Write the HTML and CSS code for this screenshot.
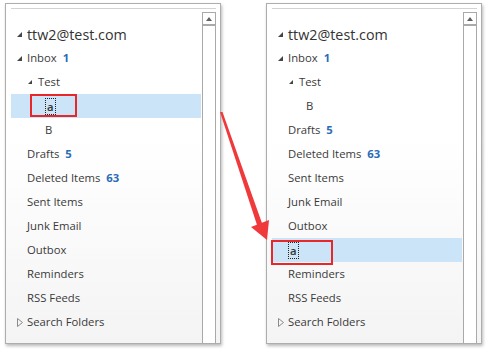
FILE: index.html
```html
<!DOCTYPE html>
<html>
<head>
<meta charset="utf-8">
<link rel="stylesheet" href="styles.css">
</head>
<body>
<div class="stage">
  <div class="panel">
    <div class="rule"></div>
    <div class="body">
      <div class="tree">
        <div class="row account"><span class="exp"></span>ttw2@test.com</div>
        <div class="row"><span class="exp"></span>Inbox<b class="count">1</b></div>
        <div class="row l1"><span class="exp"></span>Test</div>
        <div class="row l2 sel"><span class="focus">a</span><span class="mark mark-left"></span></div>
        <div class="row l2">B</div>
        <div class="row l0">Drafts<b class="count">5</b></div>
        <div class="row l0">Deleted Items<b class="count">63</b></div>
        <div class="row l0">Sent Items</div>
        <div class="row l0">Junk Email</div>
        <div class="row l0">Outbox</div>
        <div class="row l0">Reminders</div>
        <div class="row l0">RSS Feeds</div>
        <div class="row"><svg class="col" width="6" height="9" viewBox="0 0 6 9"><path d="M0.5 0.5 L5.5 4.5 L0.5 8.5 Z" fill="none" stroke="#8a8a8a" stroke-width="1"/></svg>Search Folders</div>
      </div>
      <div class="scroll"><div class="up"><span class="tri"></span></div></div>
    </div>
  </div>
  <div class="panel">
    <div class="rule"></div>
    <div class="body">
      <div class="tree">
        <div class="row account"><span class="exp"></span>ttw2@test.com</div>
        <div class="row"><span class="exp"></span>Inbox<b class="count">1</b></div>
        <div class="row l1"><span class="exp"></span>Test</div>
        <div class="row l2">B</div>
        <div class="row l0">Drafts<b class="count">5</b></div>
        <div class="row l0">Deleted Items<b class="count">63</b></div>
        <div class="row l0">Sent Items</div>
        <div class="row l0">Junk Email</div>
        <div class="row l0">Outbox</div>
        <div class="row l0 sel"><span class="focus">a</span><span class="mark mark-right"></span></div>
        <div class="row l0">Reminders</div>
        <div class="row l0">RSS Feeds</div>
        <div class="row"><svg class="col" width="6" height="9" viewBox="0 0 6 9"><path d="M0.5 0.5 L5.5 4.5 L0.5 8.5 Z" fill="none" stroke="#8a8a8a" stroke-width="1"/></svg>Search Folders</div>
      </div>
      <div class="scroll"><div class="up"><span class="tri"></span></div></div>
    </div>
  </div>
  <svg class="arrow" width="490" height="353" viewBox="0 0 490 353">
    <polygon points="220,112 222.5,112 263,226 258,228" fill="#f0393b"/>
    <polygon points="251,227 269,220 267,240" fill="#f0393b"/>
  </svg>
</div>
</body>
</html>
```

FILE: styles.css
```css
html, body {
  margin: 0;
  padding: 0;
  background: #fff;
}
.stage {
  position: relative;
  width: 490px;
  height: 353px;
  box-sizing: border-box;
  padding: 3px 0 0 5px;
  display: flex;
  gap: 45px;
  font-family: "Open Sans", "Noto Sans", sans-serif;
}
.panel {
  width: 216px;
  height: 341px;
  box-sizing: border-box;
  border: 1px solid #adadad;
  box-shadow: 1px 2px 3px rgba(0, 0, 0, 0.28);
  background: linear-gradient(#ffffff 40%, #f4f4f4);
  padding: 4px 4px 0 5px;
  display: flex;
  flex-direction: column;
}
.rule {
  height: 1px;
  background: #d3d3d3;
}
.body {
  flex: 1;
  display: flex;
}
.tree {
  width: 190px;
  padding-top: 13px;
}
.row {
  position: relative;
  height: 24px;
  box-sizing: border-box;
  display: flex;
  align-items: center;
  padding-left: 6px;
  padding-bottom: 1px;
  font-size: 11.3px;
  color: #3a3a3a;
  white-space: nowrap;
}
.row.account {
  font-size: 14.3px;
  color: #333;
  padding-bottom: 0;
}
.row.l0 { padding-left: 16px; }
.row.l1 { padding-left: 17px; }
.row.l2 { padding-left: 34px; }
.row.sel { padding-bottom: 0; }
.exp {
  width: 0;
  height: 0;
  border-left: 5px solid transparent;
  border-bottom: 5px solid #454545;
  margin-right: 5px;
  margin-top: 1px;
}
.l1 .exp {
  border-left-width: 4px;
  border-bottom-width: 4px;
  margin-right: 6px;
}
.col {
  margin-right: 4px;
  margin-top: 1px;
}
.count {
  margin-left: 6px;
  color: #2a6cb6;
  font-weight: 700;
}
.sel {
  background: #cce4f7;
}
.focus {
  display: inline-block;
  border: 1px dotted #222;
  line-height: 15px;
  padding: 0 1px;
  font-weight: 600;
  color: #333;
}
.mark {
  position: absolute;
  border: 2.5px solid #e8272b;
  box-sizing: border-box;
}
.mark-left {
  left: 19px;
  top: 0;
  width: 47px;
  height: 23px;
}
.mark-right {
  left: -1px;
  top: 2px;
  width: 62px;
  height: 25px;
}
.scroll {
  width: 14px;
  margin-left: 1px;
  margin-top: 3px;
  box-sizing: border-box;
  border: 1px solid #a9a9a9;
  border-bottom: none;
  background: #fff;
}
.up {
  height: 11px;
  border-bottom: 2px solid #a9a9a9;
  display: flex;
  justify-content: center;
  align-items: center;
}
.tri {
  width: 0;
  height: 0;
  border-left: 3.5px solid transparent;
  border-right: 3.5px solid transparent;
  border-bottom: 4px solid #606060;
}
.arrow {
  position: absolute;
  left: 0;
  top: 0;
  pointer-events: none;
}
```
